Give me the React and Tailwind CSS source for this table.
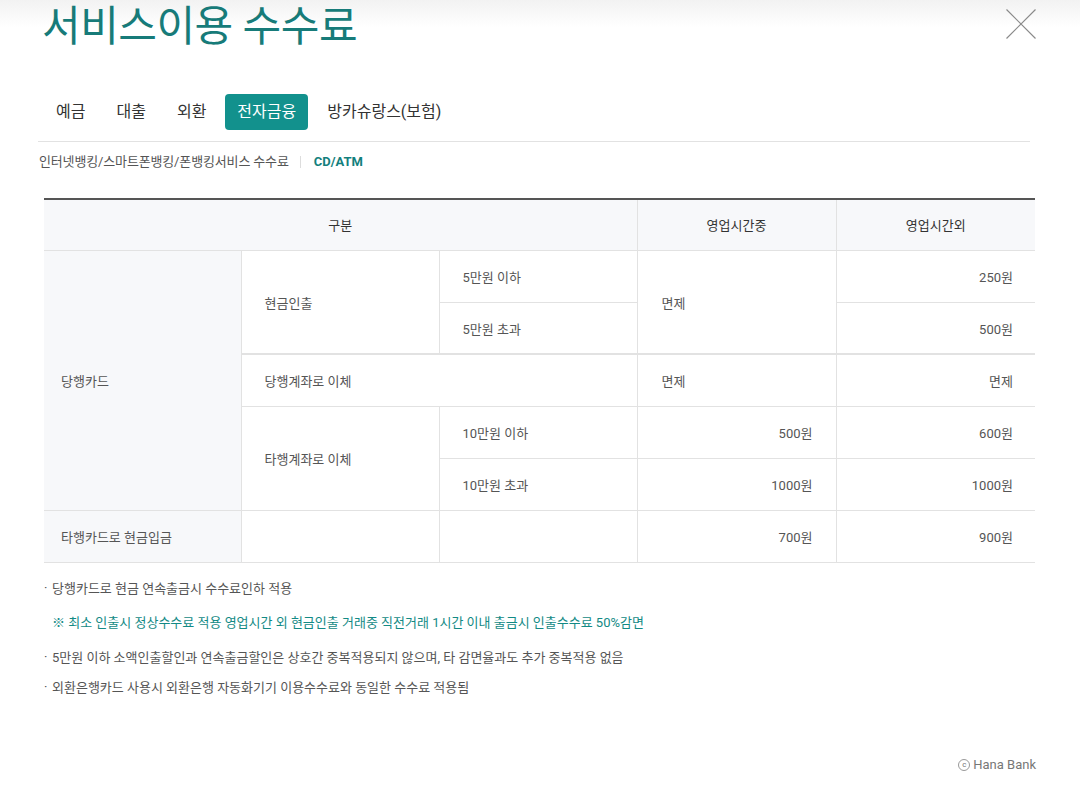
import React from "react";

export default function App() {
  const tabs = ["예금", "대출", "외환", "전자금융", "방카슈랑스(보험)"];
  const th = "text-[#333] font-normal";
  const cell = "h-[52px] pt-[3px] border-b border-[#e2e2e2] text-[13px] text-[#555] align-middle";
  const hcell = "h-[51px] pt-[1px] border-b border-[#e2e2e2] text-[13px] align-middle";
  return (
    <div className="w-[1080px] h-[803px] bg-white relative overflow-hidden font-['Roboto','Noto_Sans_CJK_KR',sans-serif]">
      {/* header */}
      <div className="h-[60px] bg-linear-to-b from-[#f2f2f2] to-white to-45% pl-[42px]">
        <h1 className="text-[42px] leading-[54px] text-[#177b79] font-normal tracking-[-0.5px]">서비스이용 수수료</h1>
      </div>
      <button className="absolute top-[9px] left-[1006px] w-[30px] h-[30px]" aria-label="close">
        <svg width="30" height="30" viewBox="0 0 30 30">
          <path d="M0.5 0.5 L29.5 29.5 M29.5 0.5 L0.5 29.5" stroke="#8a8a8a" strokeWidth="1.2" fill="none" />
        </svg>
      </button>

      {/* tabs */}
      <div className="mt-[34px] pl-[44px] flex gap-[7px]">
        {tabs.map((t) => (
          <div
            key={t}
            className={
              "h-[36px] px-3 flex items-center text-[16px] rounded-[4px] " +
              (t === "전자금융" ? "bg-[#12918d] text-white" : "text-[#333]")
            }
          >
            {t}
          </div>
        ))}
      </div>
      <div className="mt-[11px] ml-[38px] w-[992px] border-t border-[#e2e2e2]" />

      {/* sub tabs */}
      <div className="mt-[11px] ml-[39px] flex items-center h-[18px] text-[13px] tracking-[-0.15px]">
        <span className="text-[#555]">인터넷뱅킹/스마트폰뱅킹/폰뱅킹서비스 수수료</span>
        <span className="ml-[11px] mr-[13px] h-[12px] border-l border-[#ddd]" />
        <span className="text-[#137f7d] font-bold tracking-normal">CD/ATM</span>
      </div>

      {/* table */}
      <div className="mt-[27px] ml-[44px] w-[991px]">
        <table className="w-full table-fixed border-collapse border-t-2 border-[#555]">
          <colgroup>
            <col className="w-[197px]" />
            <col className="w-[198px]" />
            <col className="w-[198px]" />
            <col className="w-[199px]" />
            <col className="w-[199px]" />
          </colgroup>
          <thead>
            <tr className="bg-[#f7f8fa]">
              <th colSpan={3} className={hcell + " " + th + " text-center"}>구분</th>
              <th className={hcell + " " + th + " text-center border-l"}>영업시간중</th>
              <th className={hcell + " " + th + " text-center border-l"}>영업시간외</th>
            </tr>
          </thead>
          <tbody>
            <tr>
              <td rowSpan={5} className={cell + " bg-[#f7f8fa] text-left pl-[17px]"}>당행카드</td>
              <td rowSpan={2} className={cell + " border-l text-left pl-[23px]"}>현금인출</td>
              <td className={cell + " border-l text-left pl-[23px]"}>5만원 이하</td>
              <td rowSpan={2} className={cell + " border-l text-left pl-[24px]"}>면제</td>
              <td className={cell + " border-l text-right pr-[22px]"}>250원</td>
            </tr>
            <tr>
              <td className={cell + " border-l text-left pl-[23px]"}>5만원 초과</td>
              <td className={cell + " border-l text-right pr-[22px]"}>500원</td>
            </tr>
            <tr>
              <td colSpan={2} className={cell + " border-l border-t-2 text-left pl-[23px]"}>당행계좌로 이체</td>
              <td className={cell + " border-l border-t-2 text-left pl-[24px]"}>면제</td>
              <td className={cell + " border-l border-t-2 text-right pr-[22px]"}>면제</td>
            </tr>
            <tr>
              <td rowSpan={2} className={cell + " border-l text-left pl-[23px]"}>타행계좌로 이체</td>
              <td className={cell + " border-l text-left pl-[23px]"}>10만원 이하</td>
              <td className={cell + " border-l text-right pr-[23px]"}>500원</td>
              <td className={cell + " border-l text-right pr-[22px]"}>600원</td>
            </tr>
            <tr>
              <td className={cell + " border-l text-left pl-[23px]"}>10만원 초과</td>
              <td className={cell + " border-l text-right pr-[23px]"}>1000원</td>
              <td className={cell + " border-l text-right pr-[22px]"}>1000원</td>
            </tr>
            <tr>
              <td className={cell + " bg-[#f7f8fa] text-left pl-[17px]"}>타행카드로 현금입금</td>
              <td className={cell + " border-l"}></td>
              <td className={cell + " border-l"}></td>
              <td className={cell + " border-l text-right pr-[23px]"}>700원</td>
              <td className={cell + " border-l text-right pr-[22px]"}>900원</td>
            </tr>
          </tbody>
        </table>
      </div>

      {/* notes */}
      <div className="mt-[17px] ml-[44px] text-[13px] leading-[18px] text-[#555]">
        <div className="flex"><span className="w-[8px] -mt-[1px]">·</span><span>당행카드로 현금 연속출금시 수수료인하 적용</span></div>
        <div className="mt-[16px] pl-[8px] text-[#138a85]">※ 최소 인출시 정상수수료 적용 영업시간 외 현금인출 거래중 직전거래 1시간 이내 출금시 인출수수료 50%감면</div>
        <div className="mt-[17px] flex"><span className="w-[8px] -mt-[1px]">·</span><span>5만원 이하 소액인출할인과 연속출금할인은 상호간 중복적용되지 않으며, 타 감면율과도 추가 중복적용 없음</span></div>
        <div className="mt-[12px] flex"><span className="w-[8px] -mt-[1px]">·</span><span>외환은행카드 사용시 외환은행 자동화기기 이용수수료와 동일한 수수료 적용됨</span></div>
      </div>

      {/* footer */}
      <div className="absolute left-0 right-[44px] top-[755px] flex justify-end items-center text-[13px] text-[#777]">
        <span className="mr-[3px] w-[12px] h-[12px] rounded-full border border-[#999] text-[8px] leading-[10px] flex items-center justify-center">c</span>
        <span>Hana Bank</span>
      </div>
    </div>
  );
}
